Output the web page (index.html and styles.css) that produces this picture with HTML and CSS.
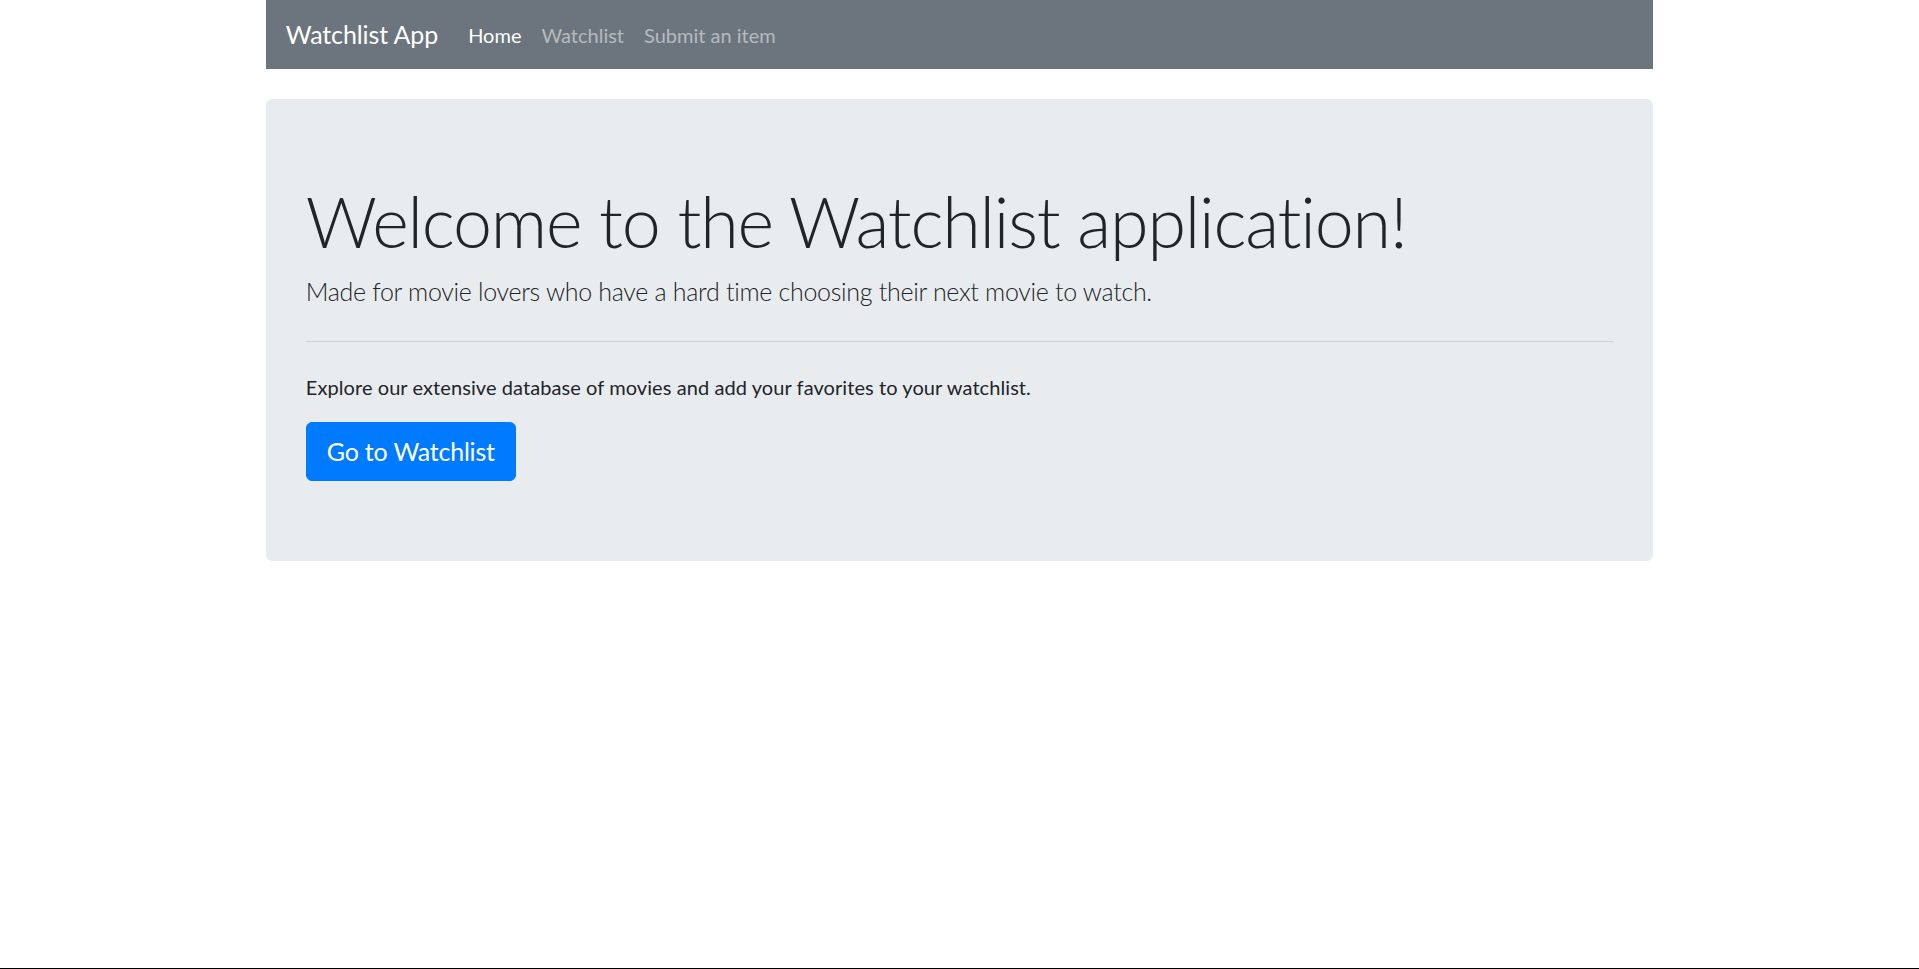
FILE: index.html
```html
<!DOCTYPE html>
<html lang="en">
<head>
<meta charset="utf-8">
<title>Watchlist App</title>
<link rel="stylesheet" href="styles.css">
</head>
<body>
<div class="container">
  <nav class="navbar">
    <a class="brand" href="#">Watchlist App</a>
    <ul class="nav">
      <li><a class="nav-link active" href="#">Home</a></li>
      <li><a class="nav-link" href="#">Watchlist</a></li>
      <li><a class="nav-link" href="#">Submit an item</a></li>
    </ul>
  </nav>
  <section class="jumbotron">
    <h1 class="display">Welcome to the Watchlist application!</h1>
    <p class="lead">Made for movie lovers who have a hard time choosing their next movie to watch.</p>
    <hr class="divider">
    <p class="text">Explore our extensive database of movies and add your favorites to your watchlist.</p>
    <a class="btn" href="#">Go to Watchlist</a>
  </section>
</div>
<div class="screen-edge"></div>
</body>
</html>
```
FILE: styles.css
```css
* { box-sizing: border-box; }
html { font-size: 20px; }
body {
  margin: 0;
  font-family: "Lato", "Liberation Sans", sans-serif;
  font-size: 20px;
  line-height: 1.5;
  color: #212529;
  background: #fff;
}
.container {
  max-width: 1425px;
  margin: 0 auto;
  padding: 0 18.75px;
}
.navbar {
  display: flex;
  align-items: center;
  background: #6c757d;
  padding: 10px 20px;
  height: 69px;
}
.brand {
  color: #fff;
  text-decoration: none;
  font-size: 25px;
  line-height: 37.5px;
  margin-right: 20px;
  padding: 6.25px 0;
  letter-spacing: -0.1px;
}
.nav {
  display: flex;
  list-style: none;
  margin: 0;
  padding: 0;
}
.nav-link {
  display: block;
  padding: 10px 10px;
  color: rgba(255, 255, 255, 0.5);
  text-decoration: none;
  font-size: 20px;
  line-height: 30px;
}
.nav-link.active { color: #fff; }
.jumbotron {
  margin-top: 30px;
  background: #e9ecef;
  border-radius: 6px;
  padding: 80px 40px;
}
.display {
  margin: 0 0 10px;
  font-size: 70px;
  font-weight: 300;
  line-height: 84px;
  letter-spacing: -1.2px;
}
.lead {
  margin: 0 0 20px;
  font-size: 25px;
  font-weight: 300;
  line-height: 37.5px;
  letter-spacing: -0.3px;
}
.divider {
  margin: 30px 0;
  border: 0;
  border-top: 1px solid rgba(0, 0, 0, 0.1);
  height: 0;
}
.text {
  margin: 0 0 20px;
  font-size: 20px;
  line-height: 30px;
  letter-spacing: 0.08px;
}
.btn {
  display: inline-block;
  background: #007bff;
  border: 1px solid #007bff;
  color: #fff;
  text-decoration: none;
  font-size: 25px;
  line-height: 37.5px;
  padding: 10px 20px;
  border-radius: 6px;
  letter-spacing: -0.2px;
}
.screen-edge {
  position: fixed;
  left: 0;
  right: 0;
  bottom: 0;
  height: 1px;
  background: #000;
}
```
